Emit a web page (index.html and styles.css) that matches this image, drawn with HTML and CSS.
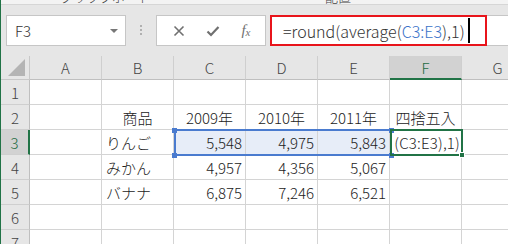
FILE: index.html
```html
<!DOCTYPE html>
<html lang="ja">
<head>
    <meta charset="utf-8">
    <link rel="stylesheet" href="styles.css">
</head>
<body>
<div class="app">
    <div class="ribbon">
        <span class="ribbon-label label-clip">クリップボード</span>
        <span class="ribbon-label label-align">配置</span>
    </div>

    <div class="fbar">
        <div class="namebox">
            <span>F3</span>
            <span class="dropdown"></span>
        </div>
        <div class="grip"><i></i><i></i><i></i></div>
        <div class="fbtns">
            <svg width="12" height="12" viewBox="0 0 12 12"><path d="M1.5 1.5 10.5 10.5M10.5 1.5 1.5 10.5" stroke="#707070" stroke-width="1.6" fill="none"/></svg>
            <svg width="14" height="12" viewBox="0 0 14 12"><path d="M1.5 6.5 5 10 12.5 2" stroke="#707070" stroke-width="2.2" fill="none"/></svg>
            <span class="fx">f<sub>x</sub></span>
        </div>
        <div class="finput">
            <span>=round(average(<span class="ref-text">C3:E3</span>),1)</span>
            <span class="cursor"></span>
            <div class="redbox"></div>
        </div>
    </div>

    <div class="sheet">
        <div class="hd corner"><svg width="18" height="17" viewBox="0 0 18 17"><polygon points="17,0 17,17 0,17" fill="#b4b4b4"/></svg></div>
        <div class="hd col">A</div>
        <div class="hd col">B</div>
        <div class="hd col">C</div>
        <div class="hd col">D</div>
        <div class="hd col">E</div>
        <div class="hd col sel-col">F</div>
        <div class="hd col">G</div>

        <div class="hd row">1</div>
        <div class="c"></div><div class="c"></div><div class="c"></div><div class="c"></div><div class="c"></div><div class="c"></div><div class="c"></div>

        <div class="hd row">2</div>
        <div class="c"></div>
        <div class="c ctr">商品</div>
        <div class="c ctr">2009年</div>
        <div class="c ctr">2010年</div>
        <div class="c ctr">2011年</div>
        <div class="c ctr">四捨五入</div>
        <div class="c"></div>

        <div class="hd row sel-row">3</div>
        <div class="c"></div>
        <div class="c txt">りんご</div>
        <div class="c num ref">5,548</div>
        <div class="c num ref">4,975</div>
        <div class="c num ref">5,843</div>
        <div class="c edit">(C3:E3),1)</div>
        <div class="c"></div>

        <div class="hd row">4</div>
        <div class="c"></div>
        <div class="c txt">みかん</div>
        <div class="c num">4,957</div>
        <div class="c num">4,356</div>
        <div class="c num">5,067</div>
        <div class="c"></div>
        <div class="c"></div>

        <div class="hd row">5</div>
        <div class="c"></div>
        <div class="c txt">バナナ</div>
        <div class="c num">6,875</div>
        <div class="c num">7,246</div>
        <div class="c num">6,521</div>
        <div class="c"></div>
        <div class="c"></div>

        <div class="hd row">6</div>
        <div class="c"></div><div class="c"></div><div class="c"></div><div class="c"></div><div class="c"></div><div class="c"></div><div class="c"></div>

        <div class="hd row">7</div>
        <div class="c"></div><div class="c"></div><div class="c"></div><div class="c"></div><div class="c"></div><div class="c"></div><div class="c"></div>

        <!-- 参照範囲 C3:E3 とアクティブセル F3 -->
        <div class="range"></div>
        <i class="handle h-tl"></i>
        <i class="handle h-bl"></i>
        <i class="handle h-tr"></i>
        <i class="handle h-br"></i>
        <div class="active"><i class="fill"></i></div>
    </div>
</div>
</body>
</html>
```

FILE: styles.css
```css
* {
    margin: 0;
    padding: 0;
    box-sizing: border-box;
}

body {
    font-family: "Noto Sans CJK JP", "Noto Sans", sans-serif;
    font-weight: 300;
    color: #222;
}

.app {
    width: 508px;
    height: 244px;
    overflow: hidden;
    border-left: 1px solid #217346;
    background-color: #e6e6e6;
}

/* リボンの下端 */
.ribbon {
    height: 5px;
    background-color: #f3f3f3;
    border-bottom: 1px solid #d6d6d6;
    overflow: hidden;
    display: flex;
    font-size: 13px;
    line-height: 13px;
}

.ribbon-label {
    margin-top: -10px;
    color: #444;
}

.label-clip {
    margin-left: 59px;
}

.label-align {
    margin-left: 174px;
}

/* 数式バー */
.fbar {
    height: 51px;
    display: flex;
    align-items: flex-start;
    padding: 10px 0 0 5px;
}

.namebox {
    width: 120px;
    height: 31px;
    background-color: #fff;
    border: 1px solid #c6c6c6;
    display: flex;
    align-items: center;
    justify-content: space-between;
    padding: 0 7px 0 8px;
    font-size: 15px;
    color: #333;
}

.dropdown {
    width: 0;
    height: 0;
    border-left: 4px solid transparent;
    border-right: 4px solid transparent;
    border-top: 4px solid #777;
}

.grip {
    width: 2px;
    margin: 10px 14px 0 14px;
    display: flex;
    flex-direction: column;
    gap: 2px;
}

.grip i {
    width: 2px;
    height: 2px;
    background-color: #b0b0b0;
}

.fbtns {
    width: 110px;
    height: 31px;
    background-color: #fff;
    border: 1px solid #c6c6c6;
    display: flex;
    align-items: center;
    justify-content: space-around;
    padding: 0 4px 0 6px;
}

.fx {
    font-family: "Liberation Serif", serif;
    font-style: italic;
    font-weight: 400;
    font-size: 15px;
    color: #707070;
    line-height: 1;
}

.fx sub {
    font-size: 11px;
    vertical-align: -1px;
}

.finput {
    position: relative;
    flex: 1;
    height: 31px;
    margin-left: 4px;
    background-color: #fff;
    border: 1px solid #c6c6c6;
    border-right: none;
    display: flex;
    align-items: center;
    padding-left: 12px;
    font-size: 16px;
    color: #333;
    white-space: nowrap;
}

.ref-text {
    color: #3a72c8;
}

.cursor {
    width: 2px;
    height: 25px;
    margin-left: 3px;
    background-color: #000;
}

.redbox {
    position: absolute;
    left: -1px;
    top: -1px;
    width: 217px;
    height: 31px;
    border: 2px solid #e8141b;
}

/* シート */
.sheet {
    position: relative;
    display: grid;
    grid-template-columns: 29px repeat(7, 72px);
    grid-template-rows: 24px repeat(7, 25px);
    background-color: #fff;
    font-size: 15px;
}

.hd {
    background-color: #e6e6e6;
    color: #444;
    display: flex;
    align-items: center;
    justify-content: center;
}

.corner {
    border-right: 1px solid #c8c8c8;
    border-bottom: 1px solid #c8c8c8;
    justify-content: flex-end;
    align-items: flex-end;
    padding: 0 3px 3px 0;
}

.col {
    border-right: 1px solid #cfcfcf;
    border-bottom: 1px solid #bfbfbf;
}

.row {
    border-right: 1px solid #bfbfbf;
    border-bottom: 1px solid #cfcfcf;
}

.sel-col {
    background-color: #d2d2d2;
    color: #1e6b41;
    border-bottom: 2px solid #217346;
}

.sel-row {
    background-color: #d2d2d2;
    color: #1e6b41;
    border-right: 2px solid #217346;
}

.c {
    border-right: 1px solid #d4d4d4;
    border-bottom: 1px solid #d4d4d4;
    display: flex;
    align-items: center;
    white-space: nowrap;
    overflow: hidden;
    color: #222;
}

.ctr {
    justify-content: center;
}

.txt {
    padding-left: 4px;
}

.num {
    justify-content: flex-end;
    padding-right: 3px;
}

.ref {
    background-color: #e7edf8;
}

.edit {
    justify-content: flex-end;
    padding-right: 1px;
    letter-spacing: 0.2px;
}

.range {
    position: absolute;
    left: 173px;
    top: 73px;
    width: 218px;
    height: 27px;
    border: 2px solid #4a7bcf;
}

.handle {
    position: absolute;
    width: 5px;
    height: 5px;
    background-color: #4a7bcf;
}

.h-tl { left: 171px; top: 72px; }
.h-bl { left: 171px; top: 97px; }
.h-tr { left: 388px; top: 72px; }
.h-br { left: 388px; top: 97px; }

.active {
    position: absolute;
    left: 389px;
    top: 73px;
    width: 73px;
    height: 27px;
    border: 2px solid #217346;
}

.fill {
    position: absolute;
    right: -4px;
    bottom: -4px;
    width: 6px;
    height: 6px;
    background-color: #217346;
    border: 1px solid #fff;
}
```
